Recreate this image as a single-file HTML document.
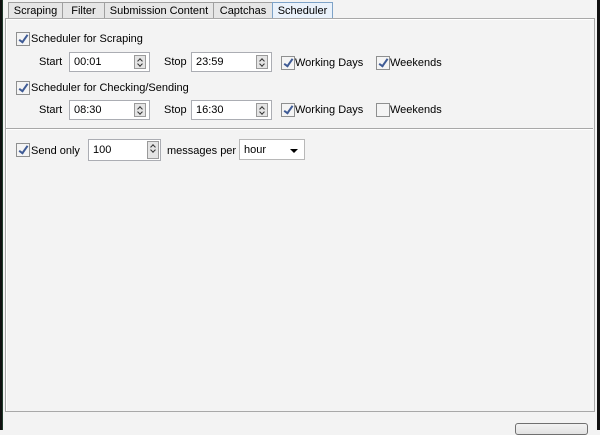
<!DOCTYPE html><html><head><style>
body{margin:0;width:600px;height:430px;background:#f3f3f3;position:relative;overflow:hidden;font-family:"Liberation Sans","DejaVu Sans",sans-serif;font-size:11px;color:#000}
.a{position:absolute}
.tab{position:absolute;top:2px;height:15px;border:1px solid #a0a0a0;border-bottom:none;background:#e6e6e6;text-align:center;line-height:16px}
.cb{position:absolute;width:12px;height:12px;border:1px solid #8e8f8f;background:#f4f4f4}
.cb.c::after{content:"";position:absolute;left:4px;top:0px;width:3px;height:8px;border-right:2px solid #3f5b95;border-bottom:2px solid #3f5b95;transform:rotate(35deg)}
.in{position:absolute;height:20px;border:1px solid #abadb3;background:#fff;line-height:19px;padding-left:4px;box-sizing:border-box}
.sp{position:absolute;right:3px;top:2px;width:12px;height:14px;border:1px solid #9a9a9a;background:#e4e4e4;box-sizing:border-box}
.sp::before,.sp::after{content:"";position:absolute;left:3px;width:3px;height:3px;border-left:1px solid #333;border-top:1px solid #333}
.sp::before{top:3px;transform:rotate(45deg)}
.sp::after{top:6px;transform:rotate(225deg)}
</style></head><body>
<div class="a" style="left:0;top:0;width:2px;height:430px;background:#101010"></div>
<div class="a" style="left:2px;top:0;width:1px;height:430px;background:#1e3a2a"></div>
<div class="a" style="left:597px;top:0;width:3px;height:430px;background:#101010"></div>
<div class="tab" style="left:8px;width:53px">Scraping</div>
<div class="tab" style="left:62px;width:41px">Filter</div>
<div class="tab" style="left:104px;width:108px">Submission Content</div>
<div class="tab" style="left:213px;width:58px">Captchas</div>
<div class="tab" style="left:272px;width:59px;background:#eaf2fb;border-color:#7ea3c8">Scheduler</div>
<div class="a" style="left:5px;top:18px;width:588px;height:392px;border:1px solid #a8a8a8;box-shadow:inset 1px 1px 0 #fff"></div>
<div class="a" style="left:6px;top:128px;width:587px;height:1px;background:#a8a8a8"></div>
<div class="a" style="left:6px;top:129px;width:587px;height:1px;background:#fff"></div>

<div class="cb c" style="left:16px;top:32px"></div><div class="a" style="left:31px;top:33px">Scheduler for Scraping</div>
<div class="a" style="left:39px;top:56px">Start</div>
<div class="in" style="left:69px;top:52px;width:81px">00:01<div class="sp"></div></div>
<div class="a" style="left:164px;top:56px">Stop</div>
<div class="in" style="left:191px;top:52px;width:81px">23:59<div class="sp"></div></div>
<div class="cb c" style="left:281px;top:56px"></div><div class="a" style="left:295px;top:57px">Working Days</div>
<div class="cb c" style="left:376px;top:56px"></div><div class="a" style="left:390px;top:57px">Weekends</div>

<div class="cb c" style="left:16px;top:81px"></div><div class="a" style="left:31px;top:82px">Scheduler for Checking/Sending</div>
<div class="a" style="left:39px;top:104px">Start</div>
<div class="in" style="left:69px;top:100px;width:81px">08:30<div class="sp"></div></div>
<div class="a" style="left:164px;top:104px">Stop</div>
<div class="in" style="left:191px;top:100px;width:81px">16:30<div class="sp"></div></div>
<div class="cb c" style="left:281px;top:103px"></div><div class="a" style="left:295px;top:104px">Working Days</div>
<div class="cb" style="left:376px;top:103px"></div><div class="a" style="left:390px;top:104px">Weekends</div>

<div class="cb c" style="left:16px;top:143px"></div><div class="a" style="left:31px;top:145px">Send only</div>
<div class="in" style="left:88px;top:139px;width:73px;height:22px;line-height:20px">100<div class="sp" style="top:1px;height:18px;right:1px;"></div></div>
<div class="a" style="left:167px;top:145px">messages per</div>
<div class="in" style="left:239px;top:139px;width:66px;height:21px;border-color:#b8b8b8;line-height:20px">hour<span class="a" style="left:50px;top:9px;width:0;height:0;border-left:4px solid transparent;border-right:4px solid transparent;border-top:4px solid #000"></span></div>

<div class="a" style="left:515px;top:423px;width:71px;height:10px;border:1px solid #707070;border-radius:3px;background:linear-gradient(#f2f2f2,#e2e2e2)"></div>
</body></html>
